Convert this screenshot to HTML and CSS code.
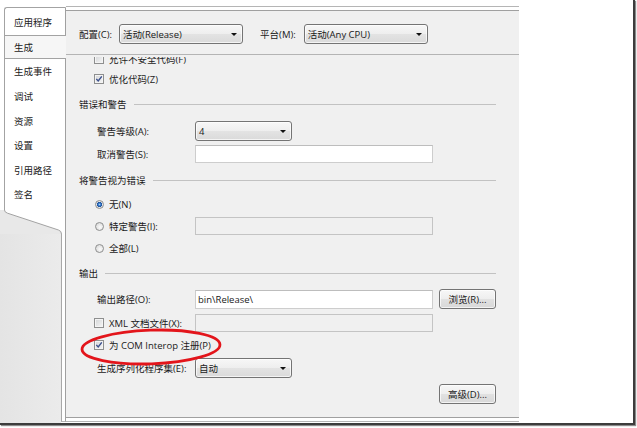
FILE: index.html
```html
<!DOCTYPE html>
<html>
<head>
<meta charset="utf-8">
<link rel="stylesheet" href="styles.css">
</head>
<body>
<div class="window">
  <div class="sidebar">
    <div class="tabs">
      <div class="tab">应用程序</div>
      <div class="tab active">生成</div>
      <div class="tab">生成事件</div>
      <div class="tab">调试</div>
      <div class="tab">资源</div>
      <div class="tab">设置</div>
      <div class="tab">引用路径</div>
      <div class="tab">签名</div>
    </div>
    <svg class="slant" width="66" height="24" viewBox="0 0 66 24">
      <rect x="0" y="0" width="66" height="24" fill="#e8e8e8"/>
      <path d="M4.5 0 Q4.5 2.2 7.5 3.2 L58.5 20 Q61.5 21 61.5 24 H66 V0 Z" fill="#ffffff"/>
      <path d="M4.5 0 Q4.5 2.2 7.5 3.2 L58.5 20 Q61.5 21 61.5 24" fill="none" stroke="#a3a3a3" stroke-width="1"/>
      <path d="M65.5 0 V24" stroke="#a0a0a0" stroke-width="1"/>
    </svg>
    <div class="lower">
      <div class="shade"></div>
      <div class="gutter"></div>
    </div>
  </div>

  <div class="frame">
    <div class="panel">
      <div class="topbar">
        <span class="tlabel">配置(C):</span>
        <div class="combo top">活动(Release)</div>
        <span class="tlabel second">平台(M):</span>
        <div class="combo top">活动(Any CPU)</div>
      </div>
      <div class="scroll">
        <div class="content">
          <div class="row cbrow">
            <span class="cb"></span><span class="cblabel">允许不安全代码(F)</span>
          </div>
          <div class="row cbrow">
            <span class="cb"><svg width="8" height="8" viewBox="0 0 8 8"><path d="M1.3 3.9 L3.2 6 L6.8 1.4" fill="none" stroke="#3a4f8c" stroke-width="1.4"/></svg></span><span class="cblabel">优化代码(Z)</span>
          </div>

          <div class="hdr h1">错误和警告</div>
          <div class="row field m7">
            <span class="flabel">警告等级(A):</span>
            <div class="combo small">4</div>
          </div>
          <div class="row field m3">
            <span class="flabel">取消警告(S):</span>
            <div class="input"></div>
          </div>

          <div class="hdr m6">将警告视为错误</div>
          <div class="row rbrow m4">
            <span class="rb on"></span><span class="rblabel">无(N)</span>
          </div>
          <div class="row rbrow m2">
            <span class="rb"></span><span class="rblabel wide">特定警告(I):</span>
            <div class="input disabled"></div>
          </div>
          <div class="row rbrow m2">
            <span class="rb"></span><span class="rblabel">全部(L)</span>
          </div>

          <div class="hdr m5">输出</div>
          <div class="row field m6">
            <span class="flabel">输出路径(O):</span>
            <div class="input path">bin\Release\</div>
            <div class="btn">浏览(R)...</div>
          </div>
          <div class="row cbrow m4">
            <span class="cb"></span><span class="cblabel wide">XML 文档文件(X):</span>
            <div class="input disabled"></div>
          </div>
          <div class="row cbrow m2">
            <span class="cb"><svg width="8" height="8" viewBox="0 0 8 8"><path d="M1.3 3.9 L3.2 6 L6.8 1.4" fill="none" stroke="#3a4f8c" stroke-width="1.4"/></svg></span><span class="cblabel">为 COM Interop 注册(P)</span>
          </div>
          <div class="row field m3">
            <span class="flabel">生成序列化程序集(E):</span>
            <div class="combo small">自动</div>
          </div>
          <div class="row field end m6">
            <div class="btn">高级(D)...</div>
          </div>
        </div>
      </div>
    </div>
  </div>

  <svg class="annot" width="150" height="44" viewBox="0 0 150 44">
    <ellipse cx="73" cy="21" rx="69" ry="16.8" transform="rotate(-2 73 21)" fill="none" stroke="#e3151b" stroke-width="2.8"/>
  </svg>
</div>
</body>
</html>
```

FILE: styles.css
```css
html, body {
  margin: 0;
  padding: 0;
  background: #ffffff;
}

body {
  width: 637px;
  height: 428px;
  overflow: hidden;
  font-family: "Open Sans", "Noto Sans CJK SC", sans-serif;
  font-size: 9.5px;
  color: #1a1a1a;
}

.window {
  position: relative;
  display: flex;
  width: 633px;
  height: 423px;
  background: #ffffff;
  border-right: 2px solid #3c3c3c;
  border-bottom: 2px solid #3c3c3c;
  box-shadow: 1px 1px 1px #8a8a8a;
}

/* ---------- left tab column ---------- */
.sidebar {
  width: 66px;
  flex: none;
  display: flex;
  flex-direction: column;
  padding-top: 7px;
  box-sizing: border-box;
}

.tabs {
  margin-left: 4px;
  height: 203px;
  box-sizing: border-box;
  border-left: 1px solid #a3a3a3;
  border-top: 1px solid #a3a3a3;
  border-right: 1px solid #a0a0a0;
  border-top-left-radius: 3px;
  background: #ffffff;
  padding-top: 2px;
}

.tab {
  height: 24.6px;
  box-sizing: border-box;
  display: flex;
  align-items: center;
  padding-left: 9px;
  white-space: nowrap;
}

.tab.active {
  margin-right: -1px;
  background: #f6f6f6;
  border-top: 1px solid #a3a3a3;
  border-bottom: 1px solid #a3a3a3;
}

.slant {
  display: block;
  flex: none;
}

.lower {
  flex: 1;
  display: flex;
}

.shade {
  width: 61px;
  background: linear-gradient(to right, #e4e4e4, #ebebeb);
}

.gutter {
  width: 5px;
  box-sizing: border-box;
  border-left: 1px solid #a8a8a8;
  border-right: 1px solid #a0a0a0;
  border-bottom: 1px solid #b5b5b5;
  background: #ffffff;
  margin-bottom: 1px;
}

/* ---------- panel ---------- */
.frame {
  width: 453px;
  flex: none;
  margin-top: 6px;
  height: 416px;
  box-sizing: border-box;
  border-top: 1px solid #b5b5b5;
  border-bottom: 1px solid #b5b5b5;
  padding: 3px 0;
  background: #ffffff;
}

.panel {
  height: 408px;
  box-sizing: border-box;
  border-top: 1px solid #a0a0a0;
  border-bottom: 1px solid #a0a0a0;
  background: #f0f0f0;
  display: flex;
  flex-direction: column;
}

.topbar {
  height: 44px;
  flex: none;
  box-sizing: border-box;
  border-bottom: 1px solid #b4b4b4;
  display: flex;
  align-items: center;
  padding: 2px 0 0 13px;
}

.tlabel {
  margin-right: 7px;
  white-space: nowrap;
}

.tlabel.second {
  margin-left: 17px;
  margin-right: 8px;
}

.combo {
  display: flex;
  align-items: center;
  height: 20px;
  box-sizing: border-box;
  border: 1px solid #747474;
  border-radius: 3px;
  background: linear-gradient(#f7f7f7, #eeeeee 50%, #e3e3e3 52%, #dadada);
  box-shadow: inset 0 0 0 1px rgba(255, 255, 255, 0.7);
  padding-left: 3px;
  white-space: nowrap;
}

.combo::after {
  content: "";
  margin: 1px 5px 0 auto;
  border-left: 3px solid transparent;
  border-right: 3px solid transparent;
  border-top: 3px solid #111;
}

.combo.top {
  width: 124px;
}

.combo.small {
  width: 97px;
}

.scroll {
  flex: 1;
  margin-top: 2px;
  overflow: hidden;
}

.content {
  margin-top: -8px;
  padding: 0 23px 0 13px;
}

.row {
  display: flex;
  align-items: center;
  height: 20px;
  white-space: nowrap;
}

.hdr {
  display: flex;
  align-items: center;
  height: 20px;
  gap: 7px;
  white-space: nowrap;
}

.hdr::after {
  content: "";
  flex: 1;
  border-top: 1px solid #c2c2c2;
}

.h1 { margin-top: 5px; }
.m2 { margin-top: 2px; }
.m3 { margin-top: 3px; }
.m4 { margin-top: 4px; }
.m5 { margin-top: 5px; }
.m6 { margin-top: 6px; }
.m7 { margin-top: 7px; }

.field {
  padding-left: 18px;
}

.field.end {
  justify-content: flex-end;
}

.flabel {
  width: 98px;
  flex: none;
}

.cbrow {
  padding-left: 15px;
}

.cb {
  width: 10px;
  height: 10px;
  flex: none;
  box-sizing: border-box;
  border: 1px solid #8e8f8f;
  background: linear-gradient(135deg, #d2d4d6, #f6f6f6);
  box-shadow: inset 0 0 0 1px #f4f4f4;
  display: flex;
  align-items: center;
  justify-content: center;
}

.cb svg {
  display: block;
}

.cblabel {
  margin-left: 5px;
}

.cblabel.wide {
  width: 86px;
  flex: none;
}

.rbrow {
  padding-left: 16px;
}

.rb {
  width: 9px;
  height: 9px;
  flex: none;
  box-sizing: border-box;
  border-radius: 50%;
  border: 1px solid #8e8f8f;
  background: radial-gradient(circle at 60% 60%, #fbfbfb, #d3d3d3);
}

.rb.on {
  background: radial-gradient(circle at 50% 50%, #a6d0f5 0, #3477c8 1.3px, #1d4f98 2.4px, #eaeaea 2.9px, #d3d3d3 100%);
}

.rblabel {
  margin-left: 5px;
}

.rblabel.wide {
  width: 86px;
  flex: none;
}

.input {
  width: 238px;
  height: 18px;
  box-sizing: border-box;
  border: 1px solid #cdcdcd;
  border-top-color: #bdbdbd;
  background: #ffffff;
  display: flex;
  align-items: center;
  padding-left: 2px;
}

.input.path {
  height: 19px;
}

.input.disabled {
  background: #f0f0f0;
  border-color: #c4c4c4;
}

.btn {
  width: 57px;
  height: 20px;
  box-sizing: border-box;
  margin-left: 6px;
  border: 1px solid #747474;
  border-radius: 3px;
  background: linear-gradient(#f7f7f7, #eeeeee 50%, #e1e1e1 52%, #d8d8d8);
  box-shadow: inset 0 0 0 1px rgba(255, 255, 255, 0.7);
  display: flex;
  align-items: center;
  justify-content: center;
}

.annot {
  position: absolute;
  left: 78px;
  top: 326px;
}
```
